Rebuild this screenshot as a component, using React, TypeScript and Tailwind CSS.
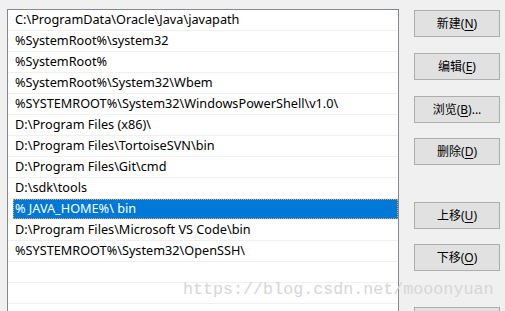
import React from "react";

const paths = [
  "C:\\ProgramData\\Oracle\\Java\\javapath",
  "%SystemRoot%\\system32",
  "%SystemRoot%",
  "%SystemRoot%\\System32\\Wbem",
  "%SYSTEMROOT%\\System32\\WindowsPowerShell\\v1.0\\",
  "D:\\Program Files (x86)\\",
  "D:\\Program Files\\TortoiseSVN\\bin",
  "D:\\Program Files\\Git\\cmd",
  "D:\\sdk\\tools",
  "% JAVA_HOME%\\ bin",
  "D:\\Program Files\\Microsoft VS Code\\bin",
  "%SYSTEMROOT%\\System32\\OpenSSH\\",
  "",
  "",
  "",
];

const SELECTED = 9;

const buttons = [
  { label: "新建", key: "N", mt: "mt-0" },
  { label: "编辑", key: "E", mt: "mt-[16px]" },
  { label: "浏览", key: "B", suffix: "...", mt: "mt-[16px]" },
  { label: "删除", key: "D", mt: "mt-[15px]" },
  { label: "上移", key: "U", mt: "mt-[37px]" },
  { label: "下移", key: "O", mt: "mt-[15px]" },
  { label: "", key: "", mt: "mt-[36px]" },
];

function Row({ text, selected }: { text: string; selected: boolean }) {
  return (
    <div className="h-[21px] border-b border-[#f0f0f0] flex">
      {selected ? (
        <div className="ml-[5px] flex-1 h-[20px] bg-[#0078d7] text-white flex items-center pl-[2px] outline-1 outline-dotted outline-[#f7a64a] -outline-offset-1">
          {text}
        </div>
      ) : (
        <div className="flex-1 h-[20px] flex items-center pl-[7px] text-black">{text}</div>
      )}
    </div>
  );
}

export default function App() {
  return (
    <div
      className="relative w-[505px] h-[311px] overflow-hidden bg-[#f0f0f0] flex pl-[7px] pt-[9px] text-[12.7px]"
      style={{ fontFamily: '"Noto Sans", "Noto Sans CJK SC", sans-serif' }}
    >
      {/* path list */}
      <div className="w-[392px] h-[320px] shrink-0 bg-white border border-[#828790] border-b-0">
        {paths.map((p, i) => (
          <Row key={i} text={p} selected={i === SELECTED} />
        ))}
      </div>

      {/* action buttons */}
      <div className="ml-[15px] mt-[1px] w-[86px] flex flex-col shrink-0">
        {buttons.map((b, i) => (
          <button
            key={i}
            type="button"
            className={`${b.mt} h-[27px] shrink-0 w-full bg-[#e1e1e1] border border-[#adadad] text-black text-[12px] flex items-center justify-center`}
          >
            {b.label && (
              <span>
                {b.label}(<span className="underline underline-offset-2">{b.key}</span>){b.suffix}
              </span>
            )}
          </button>
        ))}
      </div>

      {/* watermark */}
      <div
        className="absolute left-[183px] top-[280px] text-[16.7px] leading-[20px] text-[#d6d6d6] pointer-events-none"
        style={{ fontFamily: '"Liberation Mono", monospace' }}
      >
        https://blog.csdn.net/mooonyuan
      </div>
    </div>
  );
}
